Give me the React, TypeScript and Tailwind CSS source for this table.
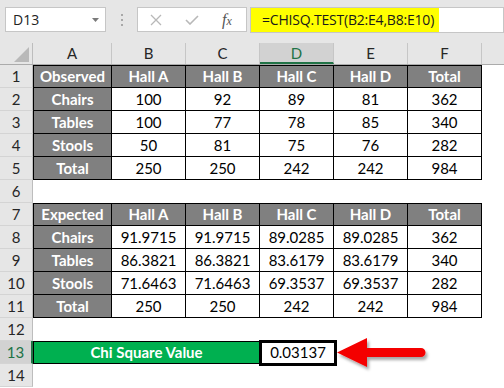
import clsx from "clsx";

const observed = [
  ["Observed", "Hall A", "Hall B", "Hall C", "Hall D", "Total"],
  ["Chairs", "100", "92", "89", "81", "362"],
  ["Tables", "100", "77", "78", "85", "340"],
  ["Stools", "50", "81", "75", "76", "282"],
  ["Total", "250", "250", "242", "242", "984"],
];

const expected = [
  ["Expected", "Hall A", "Hall B", "Hall C", "Hall D", "Total"],
  ["Chairs", "91.9715", "91.9715", "89.0285", "89.0285", "362"],
  ["Tables", "86.3821", "86.3821", "83.6179", "83.6179", "340"],
  ["Stools", "71.6463", "71.6463", "69.3537", "69.3537", "282"],
  ["Total", "250", "250", "242", "242", "984"],
];

const letters = ["A", "B", "C", "D", "E", "F"];
const colW = ["w-[79px]", "w-[74px]", "w-[74px]", "w-[74px]", "w-[74px]", "w-[74px]"];

function RowHead({ n, active }: { n: number; active?: boolean }) {
  return (
    <div
      className={clsx(
        "flex w-[33px] shrink-0 items-center justify-center border-b border-[#d4d4d4]",
        active
          ? "border-r-2 border-r-[#217346] bg-[#d2d2d2] text-[#217346]"
          : "border-r border-r-[#bdbdbd] bg-[#e6e6e6] text-[#262626]"
      )}
    >
      {n}
    </div>
  );
}

function BlankRow({ n }: { n: number }) {
  return (
    <div className="flex h-[23px]">
      <RowHead n={n} />
      <div className="flex-1 bg-white" />
    </div>
  );
}

function Table({ rows, start }: { rows: string[][]; start: number }) {
  return (
    <>
      {rows.map((row, ri) => (
        <div key={ri} className="flex h-[23px]">
          <RowHead n={start + ri} />
          {row.map((v, ci) => {
            const head = ri === 0 || ci === 0;
            return (
              <div
                key={ci}
                className={clsx(
                  colW[ci],
                  "flex shrink-0 items-center justify-center border-b border-r border-black",
                  ri === 0 && "border-t",
                  ci === 0 && "border-l",
                  head ? "bg-[#808080] font-bold text-white" : "bg-white text-black"
                )}
              >
                {v}
              </div>
            );
          })}
          <div className="flex-1 bg-white" />
        </div>
      ))}
    </>
  );
}

export default function App() {
  return (
    <div className="relative h-[388px] w-[504px] overflow-hidden bg-white font-['Lato',sans-serif] text-[15px] leading-none">
      {/* formula bar */}
      <div className="flex h-[43px] items-start bg-[#e6e6e6] pl-[5px] pt-[7px] font-['Open_Sans',sans-serif] text-[14px] text-[#222]">
        <div className="flex h-[25px] w-[101px] items-center justify-between border border-[#c6c6c6] bg-white pl-[7px] pr-[6px]">
          <span>D13</span>
          <svg width="7" height="4" viewBox="0 0 7 4">
            <polygon points="0,0 7,0 3.5,4" fill="#7a7a7a" />
          </svg>
        </div>
        <div className="flex h-[25px] w-[31px] flex-col items-center justify-center gap-[3px]">
          <span className="h-[2px] w-[2px] bg-[#a8a8a8]" />
          <span className="h-[2px] w-[2px] bg-[#a8a8a8]" />
          <span className="h-[2px] w-[2px] bg-[#a8a8a8]" />
        </div>
        <div className="flex h-[25px] w-[110px] items-center border border-[#c6c6c6] bg-white">
          <svg className="ml-[12px]" width="12" height="12" viewBox="0 0 12 12">
            <path d="M1 1 L11 11 M11 1 L1 11" stroke="#b8b8b8" strokeWidth="1.3" fill="none" />
          </svg>
          <svg className="ml-[23px]" width="14" height="10" viewBox="0 0 14 10">
            <polyline points="1,5 5,9 13,1" stroke="#b8b8b8" strokeWidth="1.6" fill="none" />
          </svg>
          <span className="ml-[23px] font-['Liberation_Serif',serif] text-[16px] italic text-[#555]">
            f<span className="text-[12px]">x</span>
          </span>
        </div>
        <div className="ml-[3px] flex h-[26px] flex-1 border border-[#c6c6c6] bg-white">
          <div className="flex h-full items-center bg-[#ffff00] pl-[11px] pr-[5px] text-[14px] tracking-[-0.2px] text-[#1a1a1a]">
            =CHISQ.TEST(B2:E4,B8:E10)
          </div>
        </div>
      </div>

      {/* column headers */}
      <div className="flex h-[22px] border-b border-[#ababab] bg-[#e6e6e6] text-[#262626]">
        <div className="flex w-[33px] shrink-0 items-end justify-end border-r border-[#bdbdbd] pb-[2px] pr-[3px]">
          <svg width="15" height="15" viewBox="0 0 15 15">
            <polygon points="15,0 15,15 0,15" fill="#b9b9b9" />
          </svg>
        </div>
        {letters.map((l, i) => (
          <div
            key={l}
            className={clsx(
              colW[i],
              "flex shrink-0 items-center justify-center border-r border-[#c6c6c6]",
              l === "D" && "border-b-2 border-b-[#217346] bg-[#d2d2d2] pt-[2px] text-[#217346]"
            )}
          >
            {l}
          </div>
        ))}
        <div className="flex-1" />
      </div>

      <Table rows={observed} start={1} />
      <BlankRow n={6} />
      <Table rows={expected} start={7} />
      <BlankRow n={12} />

      <div className="flex h-[23px]">
        <RowHead n={13} active />
        <div className="flex w-[227px] shrink-0 items-center justify-center border border-black bg-[#00b050] font-bold text-white">
          Chi Square Value
        </div>
        <div className="relative flex w-[74px] shrink-0 items-center justify-center bg-white text-black">
          <div className="absolute left-[-1px] top-[-1px] h-[26px] w-[78px] border-[3px] border-black" />
          <span className="pl-[2px]">0.03137</span>
        </div>
        <div className="flex-1 bg-white" />
      </div>

      <BlankRow n={14} />

      {/* red arrow callout */}
      <svg
        className="absolute left-[334px] top-[334px]"
        width="100"
        height="42"
        viewBox="0 0 100 42"
      >
        <defs>
          <filter id="sh" x="-10%" y="-20%" width="130%" height="160%">
            <feDropShadow dx="2" dy="3" stdDeviation="1.6" floodColor="#000" floodOpacity="0.35" />
          </filter>
        </defs>
        <path
          d="M3 18.5 L33 4 L33 14 L87 14 A4.5 4.5 0 0 1 87 23 L33 23 L33 33 Z"
          fill="#f40000"
          filter="url(#sh)"
        />
      </svg>
    </div>
  );
}
